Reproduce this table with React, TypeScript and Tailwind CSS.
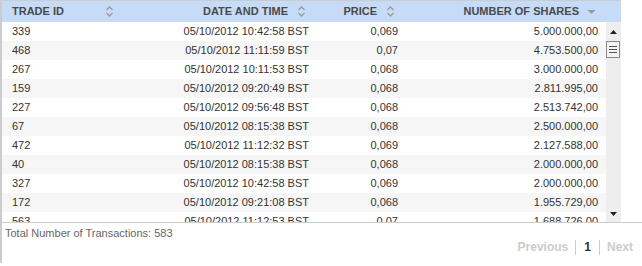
const rows = [
  ["339", "05/10/2012 10:42:58 BST", "0,069", "5.000.000,00"],
  ["468", "05/10/2012 11:11:59 BST", "0,07", "4.753.500,00"],
  ["267", "05/10/2012 10:11:53 BST", "0,068", "3.000.000,00"],
  ["159", "05/10/2012 09:20:49 BST", "0,068", "2.811.995,00"],
  ["227", "05/10/2012 09:56:48 BST", "0,068", "2.513.742,00"],
  ["67", "05/10/2012 08:15:38 BST", "0,068", "2.500.000,00"],
  ["472", "05/10/2012 11:12:32 BST", "0,069", "2.127.588,00"],
  ["40", "05/10/2012 08:15:38 BST", "0,068", "2.000.000,00"],
  ["327", "05/10/2012 10:42:58 BST", "0,069", "2.000.000,00"],
  ["172", "05/10/2012 09:21:08 BST", "0,068", "1.955.729,00"],
  ["563", "05/10/2012 11:12:53 BST", "0,07", "1.688.726,00"],
];

function SortBoth() {
  return (
    <svg width="9" height="11" viewBox="0 0 9 11" className="shrink-0">
      <path d="M1.5 4 L4.5 1 L7.5 4 M1.5 7 L4.5 10 L7.5 7" fill="none" stroke="#9a9a9a" strokeWidth="1.3" />
    </svg>
  );
}

function SortDesc() {
  return (
    <svg width="9" height="6" viewBox="0 0 9 6" className="shrink-0">
      <path d="M0.5 1 L8.5 1 L4.5 5 Z" fill="#9a9a9a" />
    </svg>
  );
}

export default function App() {
  return (
    <div className="w-[642px] h-[266px] bg-white overflow-hidden font-['Liberation_Sans',Arial,sans-serif] text-[11px] text-[#333]">
      <div className="h-[223px] border-b border-[#cccccc]">
        <div className="w-[621px] h-full border-l-2 border-[#cccccc] flex flex-col">
          {/* header */}
          <div className="h-[22px] shrink-0 flex border-t border-[#cccccc] bg-[#c6dbf7] text-[#4a4a4a] font-bold">
            <div className="w-[125px] flex items-center justify-between pl-[10px] pr-[13px]">
              <span>TRADE ID</span>
              <SortBoth />
            </div>
            <div className="w-[192px] flex items-center justify-end gap-[9px] pr-[13px]">
              <span>DATE AND TIME</span>
              <SortBoth />
            </div>
            <div className="w-[89px] flex items-center justify-end gap-[9px] pr-[13px]">
              <span>PRICE</span>
              <SortBoth />
            </div>
            <div className="flex-1 flex items-center justify-end gap-[8px] pr-[25px]">
              <span>NUMBER OF SHARES</span>
              <SortDesc />
            </div>
          </div>
          {/* body */}
          <div className="flex flex-1 min-h-0">
            <div className="flex-1 overflow-hidden">
              {rows.map((r, i) => (
                <div
                  key={i}
                  className={`flex h-[19px] leading-[19px] ${i % 2 === 1 ? "bg-[#f6f6f6]" : "bg-white"}`}
                >
                  <div className="w-[125px] pl-[10px]">{r[0]}</div>
                  <div className="w-[192px] text-right pr-[10px]">{r[1]}</div>
                  <div className="w-[89px] text-right pr-[10px]">{r[2]}</div>
                  <div className="flex-1 text-right pr-[8px]">{r[3]}</div>
                </div>
              ))}
            </div>
            {/* scrollbar */}
            <div className="w-[15px] bg-[#eeeeee] flex flex-col items-center">
              <div className="h-[19px] flex items-center justify-center">
                <svg width="7" height="4" viewBox="0 0 7 4">
                  <path d="M0 4 L3.5 0 L7 4 Z" fill="#222" />
                </svg>
              </div>
              <div className="w-[14px] h-[17px] self-start border border-[#8a8a8a] bg-[#f4f4f4] flex flex-col items-center justify-center gap-[2px]">
                <div className="w-[8px] h-px bg-[#555]" />
                <div className="w-[8px] h-px bg-[#555]" />
                <div className="w-[8px] h-px bg-[#555]" />
              </div>
              <div className="flex-1" />
              <div className="h-[16px] flex items-center justify-center">
                <svg width="7" height="4" viewBox="0 0 7 4">
                  <path d="M0 0 L7 0 L3.5 4 Z" fill="#222" />
                </svg>
              </div>
            </div>
          </div>
        </div>
      </div>
      {/* footer */}
      <div className="h-[40px] flex flex-col">
        <div className="w-full h-[41px] border-l-2 border-[#cccccc]">
          <div className="pl-[3px] pt-[3px] leading-[14px] text-[#666]">Total Number of Transactions: 583</div>
          <div className="flex justify-end items-center pr-[9px] text-[12px] font-bold leading-[13px]">
            <span className="text-[#cccccc]">Previous</span>
            <span className="mx-[7px] w-px h-[15px] bg-[#cccccc]" />
            <span className="text-[#333] px-[1px]">1</span>
            <span className="mx-[7px] w-px h-[15px] bg-[#cccccc]" />
            <span className="text-[#cccccc]">Next</span>
          </div>
        </div>
      </div>
    </div>
  );
}
